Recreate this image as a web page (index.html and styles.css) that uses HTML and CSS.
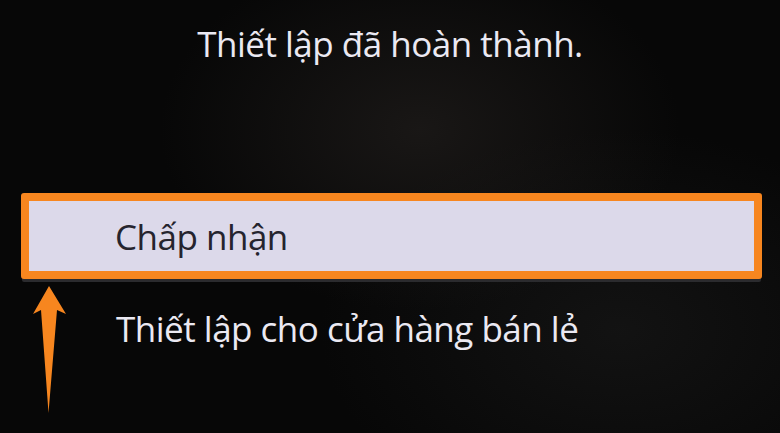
FILE: index.html
```html
<!DOCTYPE html>
<html lang="vi">
<head>
    <meta charset="UTF-8">
    <meta name="viewport" content="width=device-width, initial-scale=1.0">
    <title>Thiết lập</title>
    <link rel="stylesheet" href="styles.css">
</head>
<body>
    <div class="screen">
        <h1 class="title">Thiết lập đã hoàn thành.</h1>

        <div class="menu">
            <div class="item selected">
                <span>Chấp nhận</span>
            </div>
            <div class="item">
                <span>Thiết lập cho cửa hàng bán lẻ</span>
            </div>
        </div>

        <svg class="arrow" width="40" height="135" viewBox="0 0 40 135">
            <polygon points="17,1 34,29 25,25 16.5,128 9,25 1,29" fill="#f7861f"/>
        </svg>
    </div>
</body>
</html>
```

FILE: styles.css
```css
body {
    margin: 0;
    padding: 0;
    background-color: #050505;
    font-family: "Open Sans", "Noto Sans", sans-serif;
}

.screen {
    position: relative;
    width: 780px;
    height: 433px;
    overflow: hidden;
    background:
        radial-gradient(ellipse 260px 180px at 420px 130px, rgba(40, 36, 34, 0.55), transparent),
        radial-gradient(ellipse 300px 200px at 620px 330px, rgba(30, 30, 30, 0.5), transparent),
        #070707;
}

.title {
    margin: 0;
    padding-top: 20px;
    text-align: center;
    font-size: 35px;
    line-height: 48px;
    font-weight: 400;
    color: #ebe9f2;
    letter-spacing: -0.5px;
}

.menu {
    margin-top: 125px;
    padding: 0 18px 0 21px;
}

.item {
    display: flex;
    align-items: center;
    padding-top: 26px;
    padding-left: 95px;
    font-size: 35px;
    line-height: 48px;
    color: #ebe9f2;
    letter-spacing: -0.5px;
}

.item.selected {
    box-sizing: border-box;
    height: 86px;
    padding-top: 2px;
    padding-left: 86px;
    background-color: #dcd9ea;
    color: #25242e;
    border: 8px solid #f7861f;
    border-radius: 3px;
    box-shadow: 0 4px 0 -1px #2b2b2e;
}

.arrow {
    position: absolute;
    left: 32px;
    top: 285px;
}
```
